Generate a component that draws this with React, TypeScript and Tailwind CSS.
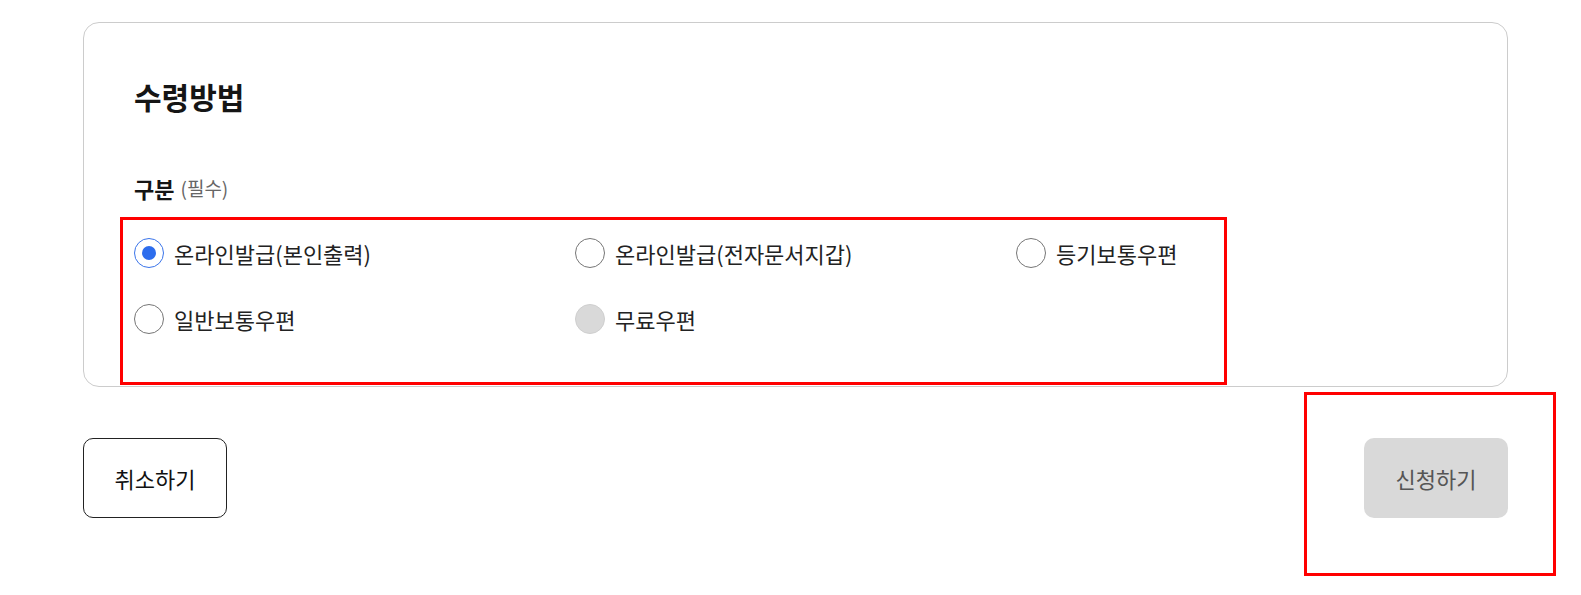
import React from "react";

type Opt = { label: string; state: "checked" | "unchecked" | "disabled" };

const options: Opt[] = [
  { label: "온라인발급(본인출력)", state: "checked" },
  { label: "온라인발급(전자문서지갑)", state: "unchecked" },
  { label: "등기보통우편", state: "unchecked" },
  { label: "일반보통우편", state: "unchecked" },
  { label: "무료우편", state: "disabled" },
];

function Radio({ state }: { state: Opt["state"] }) {
  if (state === "checked") {
    return (
      <span className="flex h-[30px] w-[30px] shrink-0 items-center justify-center rounded-full border border-[#3a74ea] bg-white">
        <span className="block h-[14px] w-[14px] rounded-full bg-[#2d6ded]" />
      </span>
    );
  }
  if (state === "disabled") {
    return <span className="block h-[30px] w-[30px] shrink-0 rounded-full border border-[#cfcfcf] bg-[#d9d9d9]" />;
  }
  return <span className="block h-[30px] w-[30px] shrink-0 rounded-full border border-[#767676] bg-white" />;
}

export default function App() {
  return (
    <div
      className="relative h-[595px] w-[1581px] overflow-hidden bg-white text-[#1e1e1e]"
      style={{ fontFamily: '"Noto Sans CJK KR", "Noto Sans", sans-serif' }}
    >
      <div className="ml-[83px] w-[1425px] pt-[22px]">
        <section className="rounded-[16px] border border-[#cccccc] px-[50px] pb-[52px] pt-[59px]">
          <h2 className="text-[30px] font-bold leading-[28px] text-[#151515]">수령방법</h2>
          <div className="mt-[68px] flex items-center text-[22px] leading-[20px]">
            <span className="font-bold text-[#151515]">구분</span>
            <span className="ml-[6px] text-[19px] text-[#666666]">(필수)</span>
          </div>
          <div className="mt-[40px] grid grid-cols-3 gap-y-[36px]">
            {options.map((o) => (
              <label key={o.label} className="flex h-[30px] items-center gap-[10px]">
                <Radio state={o.state} />
                <span className="text-[22px] leading-[30px] text-[#222222]">{o.label}</span>
              </label>
            ))}
          </div>
        </section>
        <div className="mt-[51px] flex items-center justify-between">
          <button className="flex h-[80px] w-[144px] items-center justify-center rounded-[10px] border border-[#222222] bg-white text-[22px] text-[#111111]">
            취소하기
          </button>
          <button className="flex h-[80px] w-[144px] items-center justify-center rounded-[10px] bg-[#d9d9d9] text-[22px] text-[#555555]">
            신청하기
          </button>
        </div>
      </div>

      <div className="pointer-events-none absolute left-[120px] top-[217px] h-[168px] w-[1107px] border-[3px] border-[#ff0000]" />
      <div className="pointer-events-none absolute left-[1304px] top-[392px] h-[184px] w-[252px] border-[3px] border-[#ff0000]" />
    </div>
  );
}
